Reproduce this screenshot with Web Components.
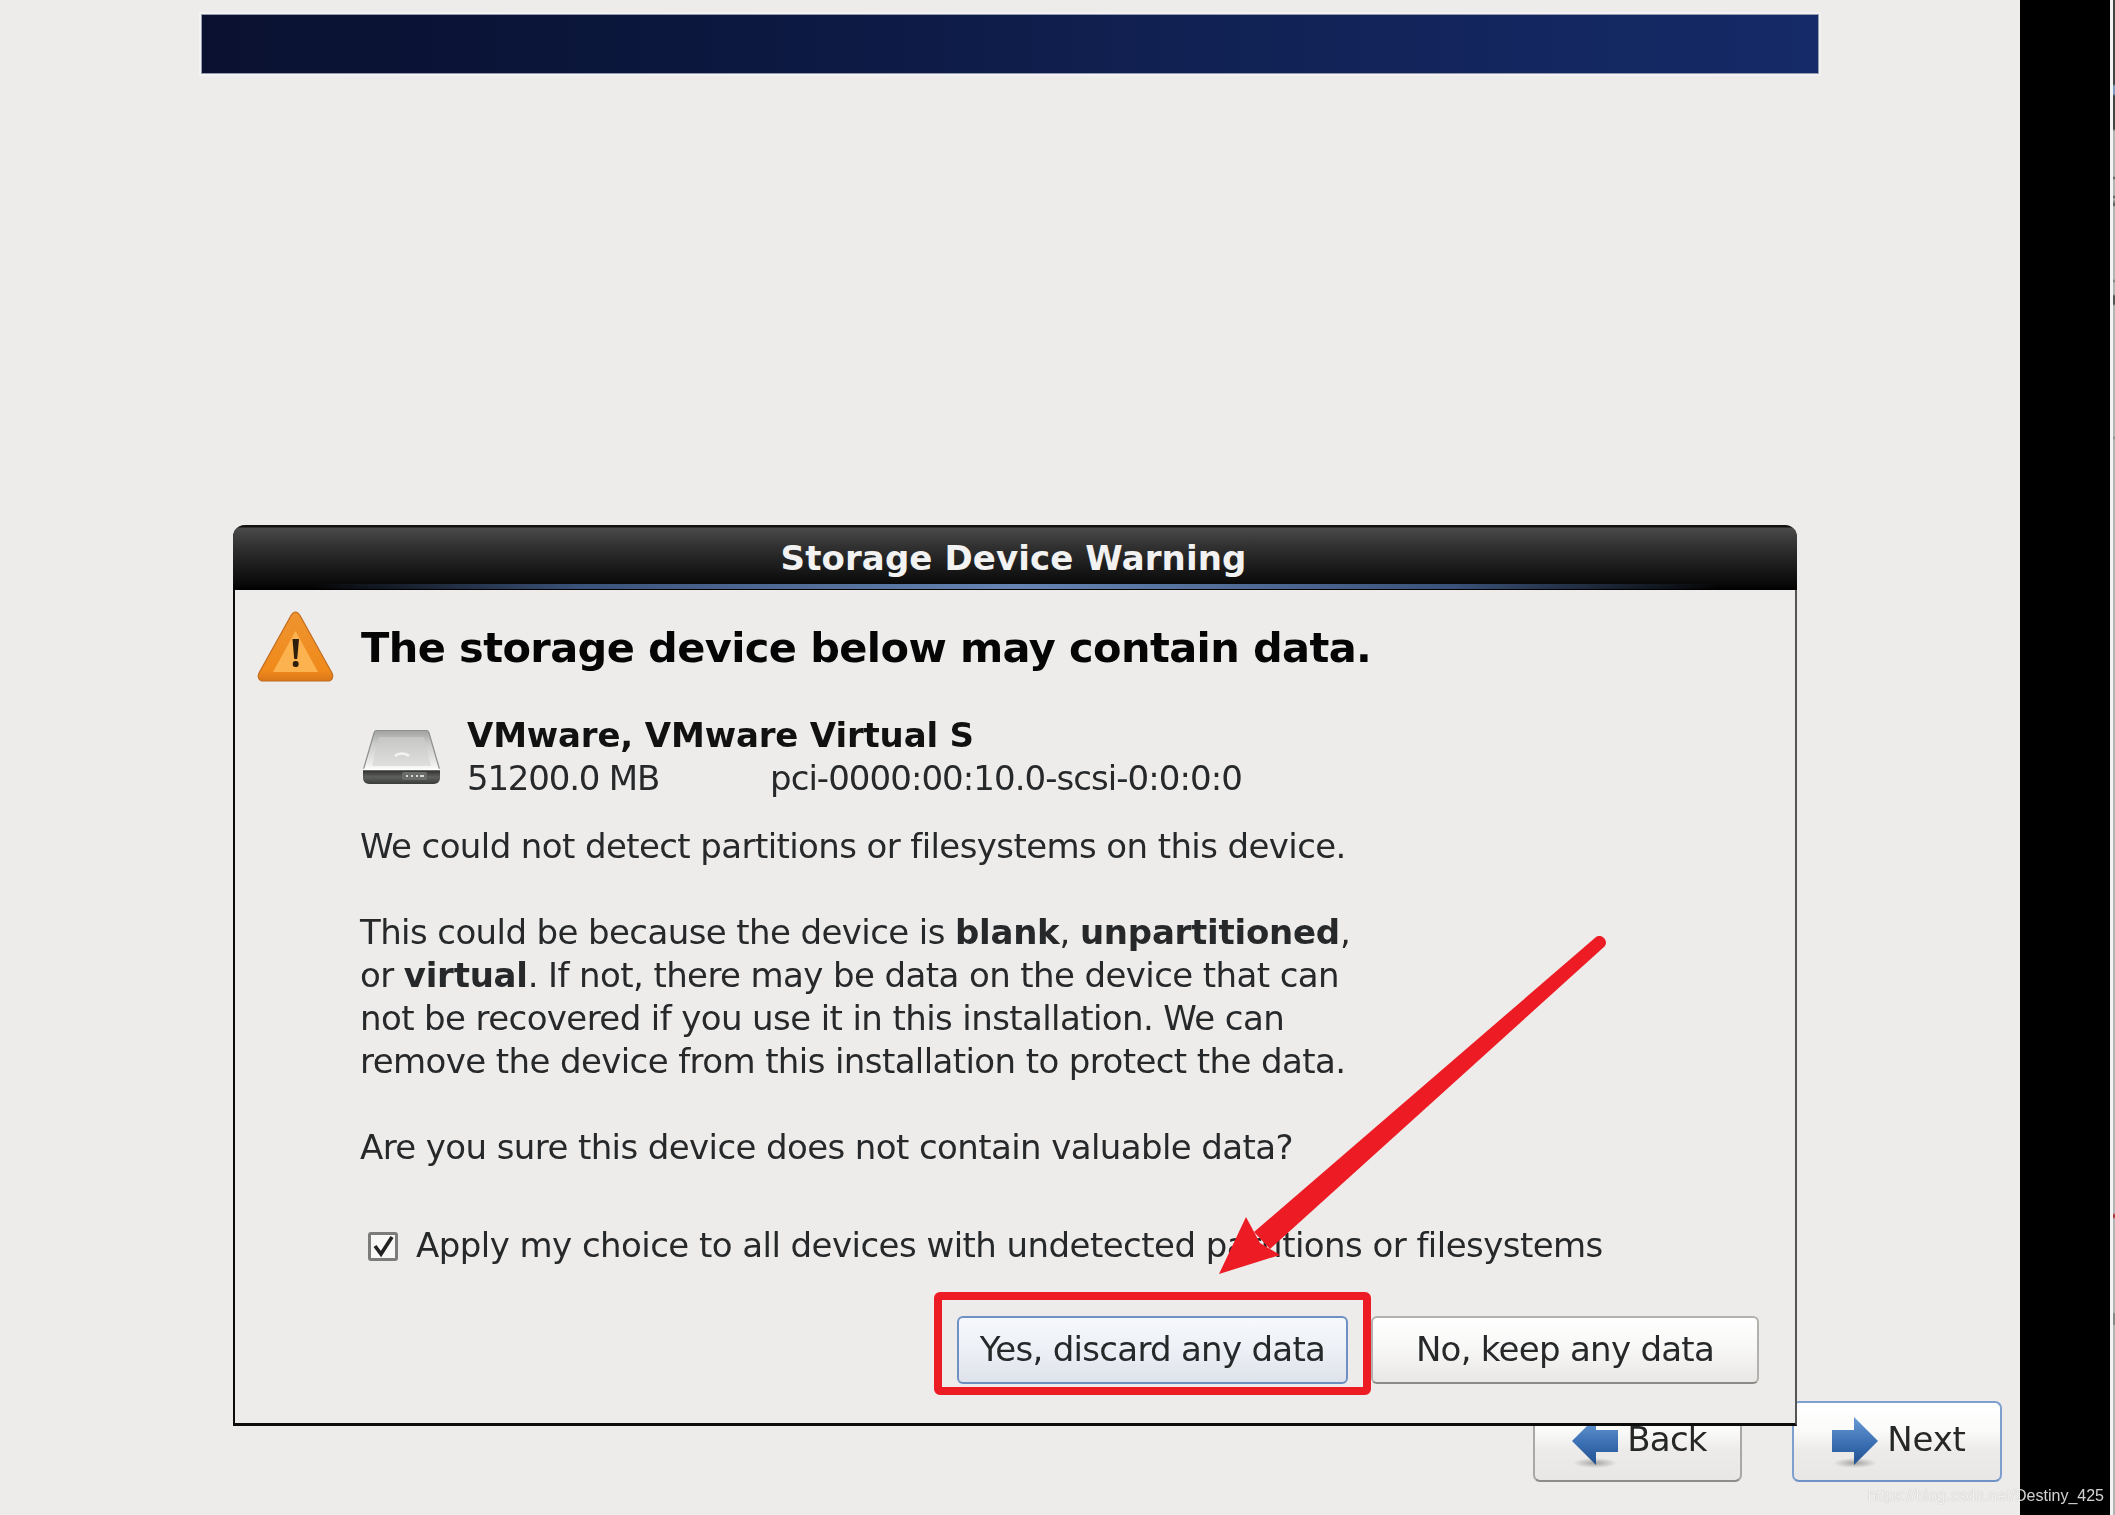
<!DOCTYPE html>
<html lang="en">
<head>
<meta charset="utf-8">
<title>Storage Device Warning</title>
<style>
html,body{margin:0;padding:0;background:#edecea;}
body{width:2115px;height:1515px;overflow:hidden;font-family:"DejaVu Sans",sans-serif;}
</style>
</head>
<body>
<installer-screen>
  <nav-button slot="nav" dir="back">Back</nav-button>
  <nav-button slot="nav" dir="next" focused>Next</nav-button>
  <warning-dialog slot="overlay" heading="Storage Device Warning">
    <span slot="title">The storage device below may contain data.</span>
    <device-row slot="device" name="VMware, VMware Virtual S" size="51200.0 MB" path="pci-0000:00:10.0-scsi-0:0:0:0"></device-row>
    <p>We could not detect partitions or filesystems on this device.</p>
    <p>This could be because the device is <b style="letter-spacing:-.25px">blank</b>, <b style="letter-spacing:-.25px">unpartitioned</b>,<br>or <b style="letter-spacing:-.25px">virtual</b>. If not, there may be data on the device that can<br>not be recovered if you use it in this installation. We can<br>remove the device from this installation to protect the data.</p>
    <p>Are you sure this device does not contain valuable data?</p>
    <check-row slot="check">Apply my choice to all devices with undetected partitions or filesystems</check-row>
    <dialog-button slot="actions" focused>Yes, discard any data</dialog-button>
    <dialog-button slot="actions">No, keep any data</dialog-button>
  </warning-dialog>
  <red-annotation slot="overlay"></red-annotation>
  <span slot="watermark">https://blog.csdn.net/Destiny_425</span>
</installer-screen>

<script>
function shadow(el, html){ el.attachShadow({mode:'open'}).innerHTML = html; }

class InstallerScreen extends HTMLElement{
  constructor(){super();shadow(this,`
  <style>
    :host{display:grid;grid-template-columns:2020px 90px 3px 2px;width:2115px;height:1515px;position:relative;background:#edecea;}
    .main{display:flex;flex-direction:column;filter:blur(.7px);}
    .banner{height:58px;margin:15px 202px 0 202px;box-sizing:border-box;width:1616px;
      background:linear-gradient(90deg,#0a1130 0%,#0c1840 35%,#112255 65%,#152a68 100%);
      box-shadow:0 0 0 1px rgba(120,125,150,.75),0 0 0 3px rgba(245,245,250,.6);}
    .spacer{flex:1;}
    .nav{display:flex;justify-content:flex-end;gap:50px;padding:0 18px 33px 0;}
    .black{background:#000;}
    .sliver{background:#f2f2f2;}
    .edge{background:linear-gradient(180deg,#444 0,#444 84px,#7f9cbc 86px,#7f9cbc 94px,#444 96px,#444 129px,#b4b4b4 131px,#b4b4b4 176px,#555 178px,#b4b4b4 180px,#b4b4b4 195px,#555 197px,#b4b4b4 199px,#555 205px,#b4b4b4 207px,#b4b4b4 279px,#777 281px,#b4b4b4 283px,#b4b4b4 294px,#555 296px,#555 304px,#b4b4b4 306px,#b4b4b4 436px,#888 438px,#b4b4b4 440px,#b4b4b4 1213px,#a33 1215px,#a33 1217px,#b4b4b4 1219px,#b4b4b4 1312px,#888 1314px,#888 1324px,#b4b4b4 1326px,#b4b4b4 100%);}
    .mark{position:absolute;right:11px;bottom:9px;font:16px/20px "Liberation Sans",sans-serif;color:rgba(255,255,255,.82);text-shadow:0 0 1px rgba(0,0,0,.3);white-space:nowrap;filter:blur(.35px);}
  </style>
  <div class="main"><div class="banner"></div><div class="spacer"></div><div class="nav"><slot name="nav"></slot></div></div>
  <div class="black"></div><div class="sliver"></div><div class="edge"></div>
  <slot name="overlay"></slot>
  <div class="mark"><slot name="watermark"></slot></div>`);}
}
customElements.define('installer-screen',InstallerScreen);

class NavButton extends HTMLElement{
  constructor(){super();
    const next=this.getAttribute('dir')==='next';
    const path=next?'M0 13H22V0L46 24 22 48V35H0Z':'M46 13H24V0L0 24 24 48V35H46Z';
    shadow(this,`
  <style>
    :host{display:flex;align-items:center;justify-content:center;gap:9px;box-sizing:border-box;height:81px;width:${next?210:209}px;
      border:2px solid ${next?'#7fa0cf':'#a9a8a5'};border-bottom-color:${next?'#6f93c6':'#8d8c89'};border-radius:7px;
      background:linear-gradient(180deg,#fff 0%,#fbfbfa 35%,#ecebe9 62%,#e8e7e5 100%);
      font:400 34px/43px "DejaVu Sans",sans-serif;letter-spacing:${next?'-.2px':'-.75px'};color:#262828;padding-left:4px;}
    svg{display:block;overflow:visible;flex:none;}
    span{position:relative;top:-2px;}
  </style>
  <svg width="46" height="48" viewBox="0 0 46 48" style="margin-top:-2px"><defs>
    <linearGradient id="g" x1="0" y1="0" x2="0" y2="1"><stop offset="0" stop-color="#6a9bd3"/><stop offset=".55" stop-color="#3a6fb3"/><stop offset="1" stop-color="#22518f"/></linearGradient>
    <radialGradient id="s"><stop offset="0" stop-color="#000" stop-opacity=".3"/><stop offset="1" stop-color="#000" stop-opacity="0"/></radialGradient></defs>
    <ellipse cx="23" cy="46" rx="22" ry="5" fill="url(#s)"/>
    <path d="${path}" fill="url(#g)"/></svg>
  <span><slot></slot></span>`);}
}
customElements.define('nav-button',NavButton);

class WarningDialog extends HTMLElement{
  constructor(){super();
    shadow(this,`
  <style>
    :host{position:absolute;left:233px;top:525px;width:1564px;height:901px;box-sizing:border-box;display:flex;flex-direction:column;
      background:#edecea;border:solid #0c0c0c;border-width:0 2px 3px 2px;border-right-color:#555;border-radius:12px 12px 0 0;filter:blur(.7px);color:#26282a;
      font:400 34px/43px "DejaVu Sans",sans-serif;letter-spacing:-.6px;}
    .bar{height:65px;margin:0 -2px;box-sizing:border-box;border-radius:12px 12px 0 0;position:relative;flex:none;
      background:linear-gradient(180deg,#111 0,#111 2px,#4a4a4a 3px,#303030 22px,#1d1d1d 40px,#0a0a0a 58px,#000 100%);
      color:#f2f2f2;font-weight:700;letter-spacing:.1px;text-align:center;line-height:66px;padding-right:3px;}
    .bar::after{content:"";position:absolute;left:0;right:0;bottom:1px;height:5px;
      background:linear-gradient(90deg,transparent 5%,#3a5279 22%,#6685b3 50%,#3a5279 78%,transparent 95%);}
    .head{display:flex;align-items:center;gap:27px;margin:20px 0 0 23px;flex:none;}
    .head span{font-size:41.5px;font-weight:700;color:#050505;letter-spacing:-.6px;}
    .body{margin:30px 0 0 125px;}
    ::slotted(p){margin:0 0 43px 0;}
    .msg{margin:25px 0 0 125px;}
    .check{margin:12px 0 0 133px;letter-spacing:-.55px;}
    .actions{display:flex;justify-content:flex-end;gap:23px;margin:49px 36px 0 0;}
    svg{display:block;flex:none;}
  </style>
  <div class="bar"></div>
  <div class="head">
    <svg width="76" height="74" viewBox="0 0 76 74" style="overflow:visible"><defs>
      <linearGradient id="w" x1="0" y1="0" x2="0" y2="1"><stop offset="0" stop-color="#ee9431"/><stop offset=".85" stop-color="#f08a1a"/><stop offset="1" stop-color="#d9761a"/></linearGradient></defs>
      <path d="M37.500 2C39.500 2 40.500 3 42 5.500L74 63C76 67 74 71 70 71H5C1 71-1 67 1 63L33 5.500C34.500 3 35.500 2 37.500 2Z" fill="url(#w)" stroke="#c26c1e" stroke-width="1.200"/>
      <path d="M37.500 21 60 62H15Z" fill="#fcb24f"/>
      <path d="M34.500 29h6.500l-1.800 20h-3Z" fill="#2d1f0c"/><rect x="34.800" y="51" width="5.800" height="6" rx="2.500" fill="#2d1f0c"/>
    </svg>
    <span><slot name="title"></slot></span>
  </div>
  <div class="body"><slot name="device"></slot></div>
  <div class="msg"><slot></slot></div>
  <div class="check"><slot name="check"></slot></div>
  <div class="actions"><slot name="actions"></slot></div>`);
    const t=document.createElement('span');
    t.textContent=this.getAttribute('heading');
    this.shadowRoot.querySelector('.bar').appendChild(t);
  }
}
customElements.define('warning-dialog',WarningDialog);

class DeviceRow extends HTMLElement{
  constructor(){super();
    shadow(this,`
  <style>
    :host{display:grid;grid-template-columns:77px 330px auto;column-gap:0;margin-left:3px;line-height:43px;}
    svg{grid-row:1/3;align-self:center;display:block;margin-top:-1px;}
    .n{grid-column:2/4;font-weight:700;color:#111;padding-left:27px;letter-spacing:-.16px;}
    .s{padding-left:27px;letter-spacing:-1.2px;}
    .p{letter-spacing:-.95px;}
  </style>
  <svg width="77" height="54" viewBox="0 0 77 54"><defs>
    <linearGradient id="d" x1="0" y1="0" x2="0" y2="1"><stop offset="0" stop-color="#a0a29f"/><stop offset=".3" stop-color="#c9cac7"/><stop offset=".8" stop-color="#ecedeb"/><stop offset="1" stop-color="#fff"/></linearGradient>
    <linearGradient id="p" x1="0" y1="0" x2="0" y2="1"><stop offset="0" stop-color="#c6c7c4"/><stop offset="1" stop-color="#dfe0dd"/></linearGradient>
    <linearGradient id="b" x1="0" y1="0" x2="0" y2="1"><stop offset="0" stop-color="#2e2f2d"/><stop offset=".5" stop-color="#5e605d"/><stop offset="1" stop-color="#3b3c3a"/></linearGradient></defs>
    <path d="M0 41 11 3a3 3 0 0 1 3-2.500H63A3 3 0 0 1 66 3L77 41Z" fill="url(#d)" stroke="#8e908c" stroke-width="1.200"/>
    <path d="M9 36 16 7H61L68 36Z" fill="url(#p)"/>
    <path d="M32 26a9 7 0 0 1 14 0" fill="none" stroke="#f4f4f3" stroke-width="2.500"/>
    <path d="M0 40H77V48a6 6 0 0 1-6 6H6a6 6 0 0 1-6-6Z" fill="url(#b)"/>
    <path d="M0 39.500H77" stroke="#fff" stroke-width="1.500"/>
    <rect x="39" y="42" width="25" height="8" rx="1.500" fill="#6a6c69"/>
    <path d="M43 46h2M48 46h2M53 46h2M57 46h4" stroke="#d8d9d6" stroke-width="2"/>
  </svg>
  <div class="n">${this.getAttribute('name')}</div>
  <div class="s">${this.getAttribute('size')}</div>
  <div class="p">${this.getAttribute('path')}</div>`);}
}
customElements.define('device-row',DeviceRow);

class CheckRow extends HTMLElement{
  constructor(){super();
    shadow(this,`
  <style>
    :host{display:flex;align-items:center;gap:18px;line-height:43px;}
    .box{width:30px;height:29px;box-sizing:border-box;border:3px solid #7c7c7c;border-radius:3px;background:#f8f8f7;display:block;flex:none;position:relative;top:1px;}
    svg{display:block;width:24px;height:23px;}
  </style>
  <span class="box"><svg viewBox="0 0 24 23"><path d="M4 11 10 19 21 2" fill="none" stroke="#222" stroke-width="3.600"/></svg></span>
  <span><slot></slot></span>`);}
}
customElements.define('check-row',CheckRow);

class DialogButton extends HTMLElement{
  constructor(){super();
    const f=this.hasAttribute('focused');
    shadow(this,`
  <style>
    :host{display:flex;align-items:center;justify-content:center;box-sizing:border-box;height:68px;width:${f?391:388}px;padding-bottom:1px;
      border:2px solid ${f?'#6f90c4':'#b2b1ae'};border-bottom-color:${f?'#6c8dc0':'#8b8a87'};border-radius:6px;
      background:${f?'linear-gradient(180deg,#f6f8fc 0%,#eef1f6 45%,#dee2ea 100%)':'linear-gradient(180deg,#fff 0%,#f8f8f7 45%,#e8e7e5 100%)'};color:#26282a;letter-spacing:-.72px;}
  </style><slot></slot>`);}
}
customElements.define('dialog-button',DialogButton);

class RedAnnotation extends HTMLElement{
  constructor(){super();
    shadow(this,`
  <style>
    :host{position:absolute;inset:0;display:block;pointer-events:none;}
    svg{position:absolute;inset:0;filter:blur(.4px);}
  </style>
  <svg width="2115" height="1515" viewBox="0 0 2115 1515">
    <rect x="938" y="1296" width="429" height="95" rx="2" fill="none" stroke="#ed1c24" stroke-width="8"/>
    <path d="M1596 937a6.500 6.500 0 0 1 8.500 9.500L1270 1249 1254 1232Z" fill="#ed1c24"/>
    <path d="M1246 1217 1219 1274 1280 1255 1260 1243Z" fill="#ed1c24"/>
  </svg>`);}
}
customElements.define('red-annotation',RedAnnotation);
</script>
</body>
</html>
